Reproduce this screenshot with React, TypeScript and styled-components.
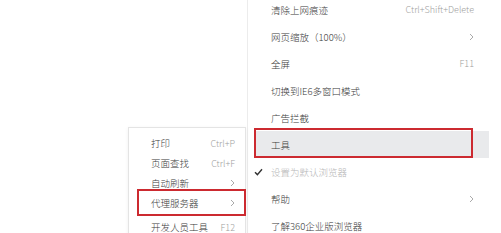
import React from 'react';
import styled, { createGlobalStyle } from 'styled-components';

const GlobalStyle = createGlobalStyle`
  html, body {
    margin: 0;
    padding: 0;
    background: #ffffff;
  }
  body {
    font-family: "Noto Sans CJK SC", "Noto Sans", sans-serif;
  }
`;

const Stage = styled.div`
  position: relative;
  width: 501px;
  height: 233px;
  overflow: hidden;
  background: #ffffff;
`;

const MainMenu = styled.div`
  position: absolute;
  left: 247px;
  top: -5px;
  width: 241px;
  display: flex;
  flex-direction: column;
  background: #ffffff;
  border-left: 1px solid #ececec;
  border-top: 1px solid #f2f2f2;
`;

const SubMenu = styled.div`
  position: absolute;
  left: 128px;
  top: 127px;
  width: 118px;
  height: 120px;
  padding-top: 5px;
  box-sizing: border-box;
  display: flex;
  flex-direction: column;
  background: #ffffff;
  border: 1px solid #e4e4e4;
  box-shadow: 0 1px 4px rgba(0, 0, 0, 0.06);
  z-index: 2;
`;

const MainRow = styled.div<{ $active?: boolean }>`
  position: relative;
  height: 27px;
  display: flex;
  align-items: center;
  justify-content: space-between;
  margin-left: ${(p) => (p.$active ? '6px' : '0')};
  padding: 0 15px 0 ${(p) => (p.$active ? '17px' : '23px')};
  background: ${(p) => (p.$active ? '#e9eaec' : 'transparent')};
  font-size: 9.5px;
`;

const SubRow = styled.div<{ $gap?: number }>`
  position: relative;
  height: 20px;
  margin-top: ${(p) => p.$gap ?? 0}px;
  display: flex;
  align-items: center;
  justify-content: space-between;
  padding: 0 10px 0 22px;
  font-size: 9.5px;
`;

const Label = styled.span<{ $muted?: boolean }>`
  color: ${(p) => (p.$muted ? '#b5b5b5' : '#3a3a3a')};
  font-weight: 300;
  white-space: nowrap;
`;

const Shortcut = styled.span`
  color: #9e9e9e;
  font-size: 9px;
  font-weight: 300;
  white-space: nowrap;
`;

const Check = styled.svg`
  position: absolute;
  left: 6px;
  top: 50%;
  margin-top: -4px;
`;

const Highlight = styled.div<{ $left: number; $top: number; $w: number; $h: number }>`
  position: absolute;
  left: ${(p) => p.$left}px;
  top: ${(p) => p.$top}px;
  width: ${(p) => p.$w}px;
  height: ${(p) => p.$h}px;
  box-sizing: border-box;
  border: 2px solid #cc2a30;
  pointer-events: none;
`;

const Chevron = () => (
  <svg width="5" height="8" viewBox="0 0 5 8">
    <path d="M1 1 L4 4 L1 7" fill="none" stroke="#a0a0a0" strokeWidth="0.9" />
  </svg>
);

type Item = { label: string; right?: string; arrow?: boolean; muted?: boolean; checked?: boolean; active?: boolean };

const mainItems: Item[] = [
  { label: '清除上网痕迹', right: 'Ctrl+Shift+Delete' },
  { label: '网页缩放（100%）', arrow: true },
  { label: '全屏', right: 'F11' },
  { label: '切换到IE6多窗口模式' },
  { label: '广告拦截' },
  { label: '工具', active: true },
  { label: '设置为默认浏览器', muted: true, checked: true },
  { label: '帮助', arrow: true },
  { label: '了解360企业版浏览器' },
];

const subItems: (Item & { gap?: number })[] = [
  { label: '打印', right: 'Ctrl+P' },
  { label: '页面查找', right: 'Ctrl+F' },
  { label: '自动刷新', arrow: true },
  { label: '代理服务器', arrow: true, active: true },
  { label: '开发人员工具', right: 'F12', gap: 4 },
];

export default function App() {
  return (
    <>
      <GlobalStyle />
      <Stage>
        <MainMenu>
          {mainItems.map((item) => (
            <MainRow key={item.label} $active={item.active}>
              {item.checked && (
                <Check width="9" height="8" viewBox="0 0 9 8">
                  <path d="M1 4.2 L3.4 6.6 L8 1.2" fill="none" stroke="#333" strokeWidth="1.4" />
                </Check>
              )}
              <Label $muted={item.muted}>{item.label}</Label>
              {item.right && <Shortcut>{item.right}</Shortcut>}
              {item.arrow && <Chevron />}
              {item.active && <Highlight $left={0} $top={-3} $w={219} $h={30} />}
            </MainRow>
          ))}
        </MainMenu>
        <SubMenu>
          {subItems.map((item) => (
            <SubRow key={item.label} $gap={item.gap}>
              <Label>{item.label}</Label>
              {item.right && <Shortcut>{item.right}</Shortcut>}
              {item.arrow && <Chevron />}
              {item.active && <Highlight $left={8} $top={-4} $w={109} $h={27} />}
            </SubRow>
          ))}
        </SubMenu>
      </Stage>
    </>
  );
}
